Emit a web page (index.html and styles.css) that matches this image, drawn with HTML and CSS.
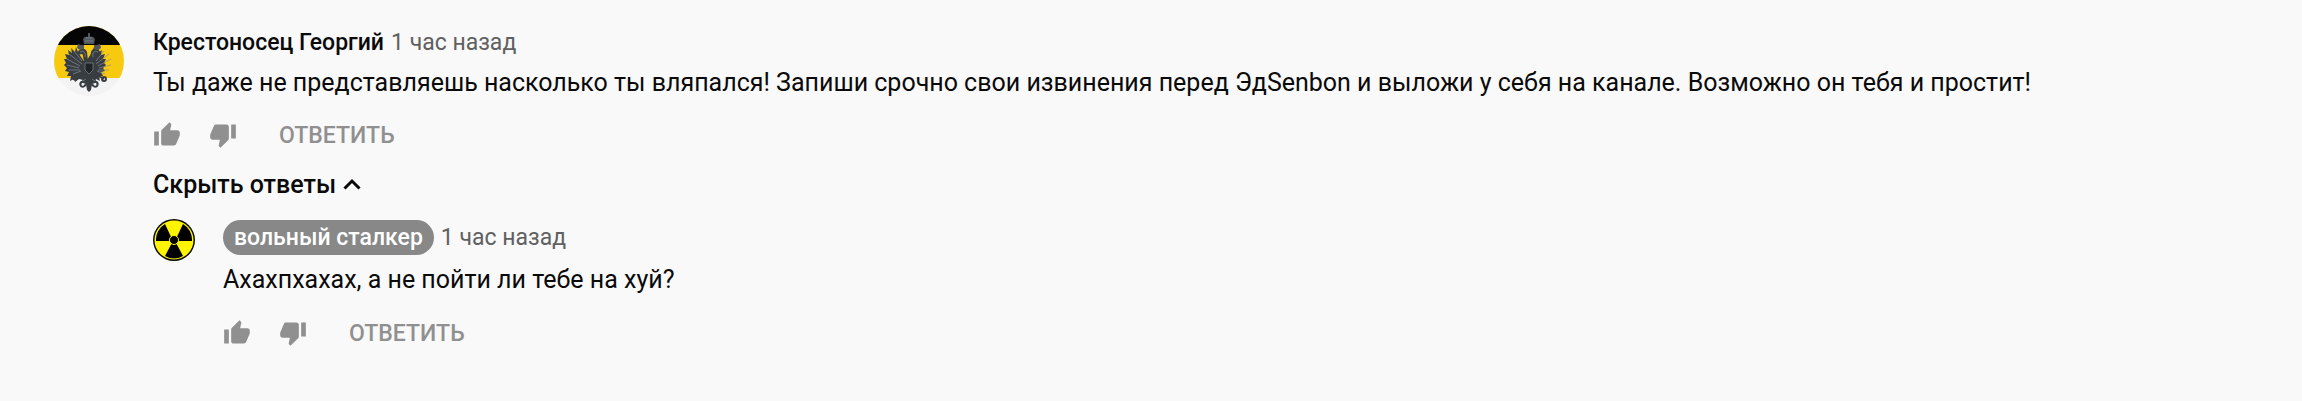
FILE: index.html
```html
<!DOCTYPE html>
<html lang="ru">
<head>
<meta charset="utf-8">
<title>Комментарии</title>
<link rel="stylesheet" href="styles.css">
</head>
<body>
<svg width="0" height="0" class="defs" aria-hidden="true">
  <symbol id="up" viewBox="0 0 24 24"><path d="M1 21h4V9H1v12zm22-11c0-1.100-.9-2-2-2h-6.310l.95-4.570.03-.32c0-.41-.17-.79-.44-1.060L14.170 1 7.590 7.590C7.220 7.950 7 8.450 7 9v10c0 1.100.9 2 2 2h9c.83 0 1.540-.5 1.840-1.220l3.020-7.050c.09-.23.14-.47.14-.73v-2z"/></symbol>
  <symbol id="down" viewBox="0 0 24 24"><path d="M15 3H6c-.83 0-1.540.5-1.840 1.220l-3.020 7.050c-.09.23-.14.47-.14.73v2c0 1.100.9 2 2 2h6.310l-.95 4.570-.03.32c0 .41.17.79.44 1.060L9.830 23l6.590-6.590c.36-.36.58-.86.58-1.410V5c0-1.100-.9-2-2-2zm4 0v12h4V3h-4z"/></symbol>
</svg>
<main class="thread">
  <article class="comment">
    <svg class="avatar" viewBox="0 0 70 70" role="img" aria-label="Крестоносец Георгий">
      <clipPath id="disc"><circle cx="35" cy="35" r="35"/></clipPath>
      <g clip-path="url(#disc)">
        <path fill="#f3f3f4" d="M0 0h70v70H0z"/>
        <path fill="#f7c90f" d="M0 0h70v52H0z"/>
        <path fill="#050505" d="M0 0h70v19H0z"/>
      </g>
      <g fill="#383d42">
        <path d="M30 35C27 31 24 27 22 21l-1 5-4-4 1 5-4-3 1 5-4-1 2 5-3 0 2 4-2 2 3 3-2 3 4 1-2 4 4 0-1 5 4-2 1 3 4-3 4 1 4 0 4-1 4 3 1-3 4 2-1-5 4 0-2-4 4-1-2-3 3-3-2-2 2-4-3 0 2-5-4 1 1-5-4 3 1-5-4 4-1-5c-2 6-5 10-8 14z"/>
        <path d="M32 37c-4-3-2-8-4-9l-5 1c0-6 8-9 10-3l1 9zM38 37c4-3 2-8 4-9l5 1c0-6-8-9-10-3l-1 9z"/>
        <path d="M32 48h6l1 5 5 3-6 2-1 6-2 2-2-2-1-6-6-2 5-3z"/>
      </g>
      <g fill="#50585e">
        <path d="M30 18l-1-5c2-3 4-3 5-2l0-4h2l0 4c1-1 3-1 5 2l-1 5z"/>
        <path d="M23 22l1-4 3 1 3 0 0 4-4 1zM47 22l-1-4-3 1-3 0 0 4 4 1z"/>
      </g>
      <g fill="none" stroke="#383d42" stroke-width="2">
        <path d="M20 52l9-4M50 53l-9-5"/>
        <circle cx="21" cy="52" r="1.500"/><circle cx="50" cy="53" r="2"/>
        <path d="M34 56c-6-2-9 1-7 4 2 2 4 0 5-2M36 56c6-2 9 1 7 4-2 2-4 0-5-2"/>
      </g>
      <g fill="none" stroke="#858e96" stroke-width=".7">
        <path d="M15 28l13 10M13 33l13 7M13 39l12 3M15 44l11 0M19 48l8-3M20 25l8 10M55 28L42 38M57 33l-13 7M57 39l-12 3M55 44l-11 0M51 48l-8-3M50 25l-8 10"/>
        <path d="M31 15l8 0M32 12l6 0M26 26c4-2 6 1 5 5M44 26c-4-2-6 1-5 5M32 53l-3 2M38 53l3 2"/>
      </g>
      <path fill="#202428" stroke="#7f878f" stroke-width=".7" d="M31 37h8v7l-4 4-4-4z"/>
    </svg>
    <div class="body">
      <header class="meta"><a class="author" href="#">Крестоносец Георгий</a><a class="time" href="#">1 час назад</a></header>
      <p class="text">Ты даже не представляешь насколько ты вляпался! Запиши срочно свои извинения перед ЭдSenbon и выложи у себя на канале. Возможно он тебя и простит!</p>
      <div class="actions">
        <button class="vote" aria-label="Нравится"><svg><use href="#up"/></svg></button>
        <button class="vote" aria-label="Не нравится"><svg><use href="#down"/></svg></button>
        <button class="answer">ОТВЕТИТЬ</button>
      </div>
      <button class="toggle">Скрыть ответы<svg viewBox="0 0 18 12"><path d="M1.500 10.500l7.500-7.500 7.500 7.500" fill="none" stroke="currentColor" stroke-width="3"/></svg></button>
      <article class="comment reply">
        <svg class="avatar small" viewBox="0 0 42 42" role="img" aria-label="вольный сталкер">
          <circle cx="21" cy="21" r="21" fill="#0a0a00"/>
          <circle cx="21" cy="21" r="19.500" fill="#fff500"/>
          <path d="M20 22H3A18 18 0 0 1 12 5zM22 22L30 5A18 18 0 0 1 39 22zM21 20L30 37A18 18 0 0 1 12 37z"/>
          <circle cx="21" cy="21" r="4.500" stroke="#fff500" stroke-width="1"/>
        </svg>
        <div class="body">
          <header class="meta"><a class="author badge" href="#">вольный сталкер</a><a class="time" href="#">1 час назад</a></header>
          <p class="text">Ахахпхахах, а не пойти ли тебе на хуй?</p>
          <div class="actions">
            <button class="vote" aria-label="Нравится"><svg><use href="#up"/></svg></button>
            <button class="vote" aria-label="Не нравится"><svg><use href="#down"/></svg></button>
            <button class="answer">ОТВЕТИТЬ</button>
          </div>
        </div>
      </article>
    </div>
  </article>
</main>
</body>
</html>
```
FILE: styles.css
```css
* { box-sizing: border-box; }
body {
  margin: 0;
  background: #f9f9f9;
  color: #0a0a0a;
  font-family: Roboto, "Liberation Sans", sans-serif;
  font-size: 25px;
}
.defs { position: absolute; }
.thread { padding: 26px 54px; }
.comment { display: flex; gap: 29px; }
.avatar { flex: none; width: 70px; height: 70px; }
.avatar.small { width: 42px; height: 42px; }
.body { flex: 1; min-width: 0; }
.meta {
  display: flex;
  align-items: center;
  gap: 7px;
  height: 32px;
  font-size: 23px;
}
.meta a { text-decoration: none; }
.author { color: #0a0a0a; font-weight: 500; }
.time { color: #606060; }
.badge {
  padding: 0 11px;
  border-radius: 18px;
  background: #888;
  color: #fff;
  line-height: 35px;
}
.text { margin: 7px 0 0; line-height: 35px; }
button {
  padding: 0;
  border: 0;
  background: none;
  font: inherit;
  cursor: pointer;
}
.actions {
  display: flex;
  align-items: center;
  height: 56px;
  margin-top: 7px;
  color: #909090;
}
.vote { width: 28px; height: 28px; margin-right: 28px; color: inherit; }
.vote svg { display: block; width: 28px; height: 28px; fill: currentColor; }
.answer { margin-left: 14px; color: inherit; font-size: 23px; font-weight: 500; }
.toggle {
  display: flex;
  align-items: center;
  gap: 7px;
  height: 42px;
  color: #0a0a0a;
  font-weight: 500;
}
.toggle svg { width: 18px; height: 12px; }
.reply { gap: 28px; margin-top: 14px; }
.reply .meta { height: 36px; }
.reply .actions { margin-top: 8px; }
```
